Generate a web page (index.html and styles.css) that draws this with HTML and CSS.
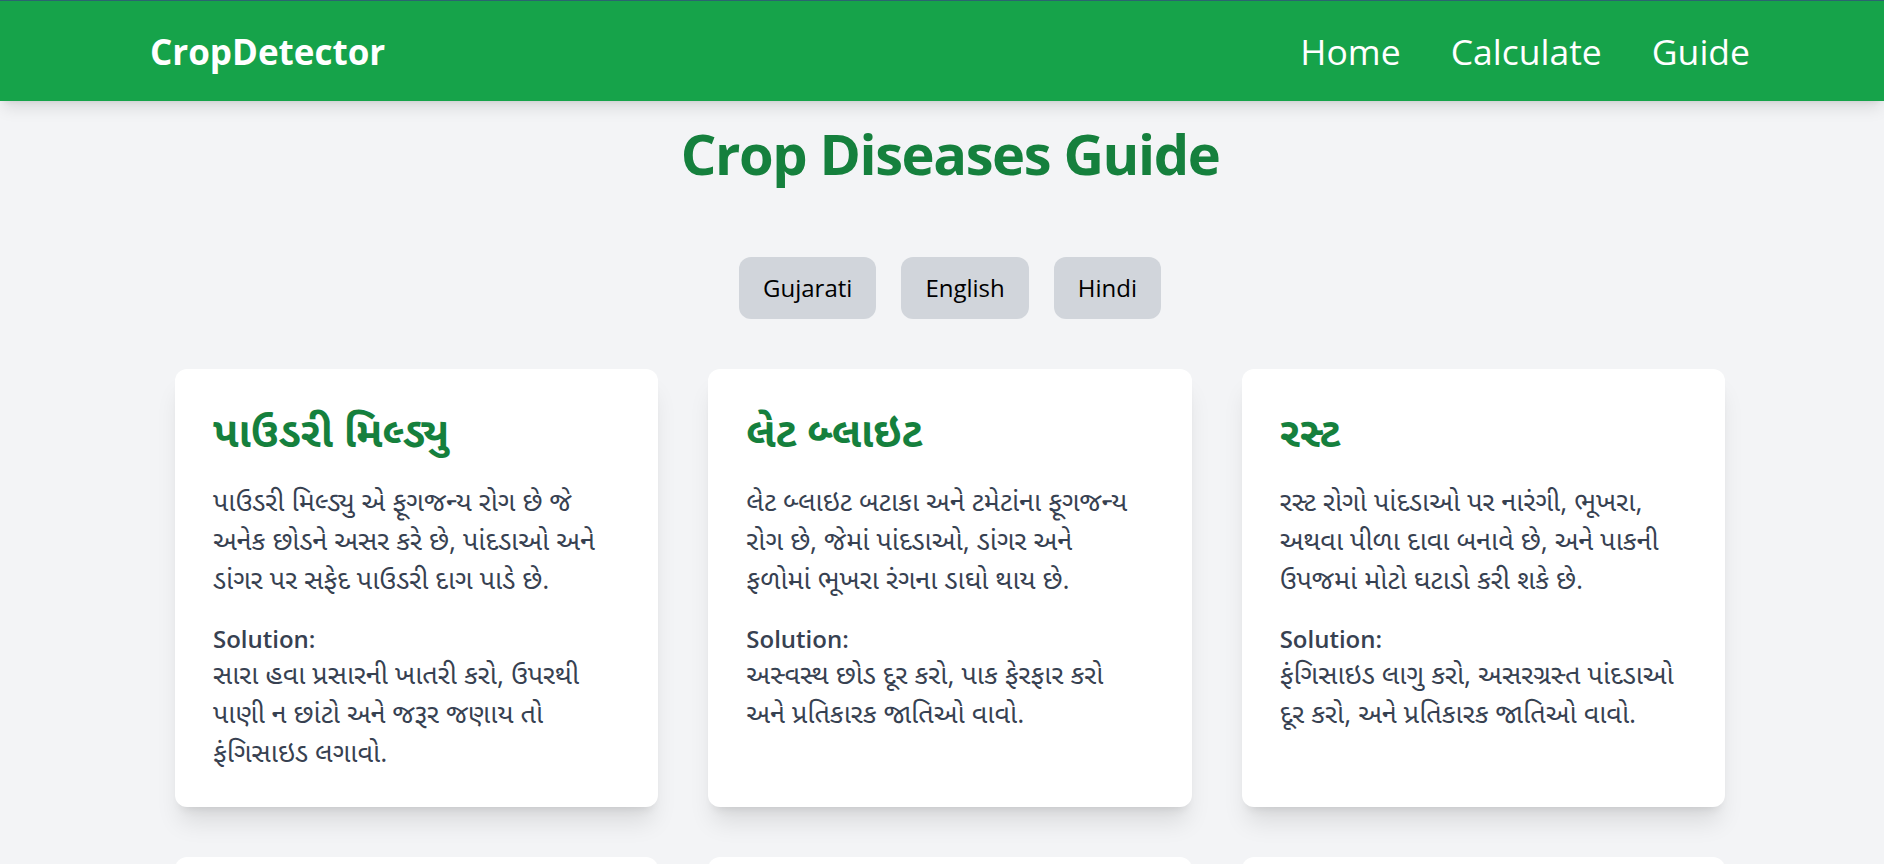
FILE: index.html
```html
<!DOCTYPE html>
<html lang="gu">
<head>
<meta charset="utf-8">
<title>CropDetector - Crop Diseases Guide</title>
<link rel="stylesheet" href="styles.css">
</head>
<body>
<header class="navbar">
  <div class="nav-inner">
    <a class="brand" href="#">CropDetector</a>
    <nav class="nav-links">
      <a href="#">Home</a>
      <a href="#">Calculate</a>
      <a href="#">Guide</a>
    </nav>
  </div>
</header>
<main class="page">
  <h1 class="page-title">Crop Diseases Guide</h1>
  <div class="lang-switch">
    <button class="lang-btn">Gujarati</button>
    <button class="lang-btn">English</button>
    <button class="lang-btn">Hindi</button>
  </div>
  <div class="card-grid">
    <article class="card">
      <h2 class="card-title">પાઉડરી મિલ્ડ્યુ</h2>
      <p class="card-desc">પાઉડરી મિલ્ડ્યુ એ ફૂગજન્ય રોગ છે જે અનેક છોડને અસર કરે છે, પાંદડાઓ અને ડાંગર પર સફેદ પાઉડરી દાગ પાડે છે.</p>
      <p class="card-solution"><strong class="sol-label">Solution:</strong>સારા હવા પ્રસારની ખાતરી કરો, ઉપરથી પાણી ન છાંટો અને જરૂર જણાય તો ફંગિસાઇડ લગાવો.</p>
    </article>
    <article class="card">
      <h2 class="card-title">લેટ બ્લાઇટ</h2>
      <p class="card-desc">લેટ બ્લાઇટ બટાકા અને ટમેટાંના ફૂગજન્ય રોગ છે, જેમાં પાંદડાઓ, ડાંગર અને<br>ફળોમાં ભૂખરા રંગના ડાઘો થાય છે.</p>
      <p class="card-solution"><strong class="sol-label">Solution:</strong>અસ્વસ્થ છોડ દૂર કરો, પાક ફેરફાર કરો અને પ્રતિકારક જાતિઓ વાવો.</p>
    </article>
    <article class="card">
      <h2 class="card-title">રસ્ટ</h2>
      <p class="card-desc">રસ્ટ રોગો પાંદડાઓ પર નારંગી, ભૂખરા, અથવા પીળા દાવા બનાવે છે, અને પાકની ઉપજમાં મોટો ઘટાડો કરી શકે છે.</p>
      <p class="card-solution"><strong class="sol-label">Solution:</strong>ફંગિસાઇડ લાગુ કરો, અસરગ્રસ્ત પાંદડાઓ દૂર કરો, અને પ્રતિકારક જાતિઓ વાવો.</p>
    </article>
    <article class="card">
      <h2 class="card-title">બેક્ટેરિયલ બ્લાઇટ</h2>
      <p class="card-desc">બેક્ટેરિયલ બ્લાઇટ પાંદડાઓ પર પાણીથી ભરેલા ડાઘ બનાવે છે, જે પછી પીળા અને સૂકા થઈ જાય છે.</p>
      <p class="card-solution"><strong class="sol-label">Solution:</strong>રોગમુક્ત બીજ વાપરો અને કોપર આધારિત દવા છાંટો.</p>
    </article>
    <article class="card">
      <h2 class="card-title">લીફ સ્પોટ</h2>
      <p class="card-desc">લીફ સ્પોટ પાંદડાઓ પર નાના ભૂખરા અથવા કાળા ડાઘ બનાવે છે.</p>
      <p class="card-solution"><strong class="sol-label">Solution:</strong>ચેપગ્રસ્ત પાંદડાઓ દૂર કરો અને ફંગિસાઇડ લગાવો.</p>
    </article>
    <article class="card">
      <h2 class="card-title">રૂટ રોટ</h2>
      <p class="card-desc">રૂટ રોટ વધુ પાણીને કારણે મૂળ સડી જાય છે અને છોડ કરમાઈ જાય છે.</p>
      <p class="card-solution"><strong class="sol-label">Solution:</strong>યોગ્ય નિકાલ રાખો અને વધુ પાણી આપવાનું ટાળો.</p>
    </article>
  </div>
</main>
</body>
</html>
```
FILE: styles.css
```css
* { box-sizing: border-box; }

body {
  margin: 0;
  background: #f3f4f6;
  font-family: "Open Sans", "Noto Sans", "Noto Sans Gujarati", "Lohit Gujarati", sans-serif;
  color: #374151;
}

.navbar {
  background: #16a34a;
  border-top: 1px solid #2b6470;
  box-shadow: 0 10px 15px -3px rgba(0,0,0,0.1), 0 4px 6px -4px rgba(0,0,0,0.1);
  padding-left: 16px;
  position: relative;
}

.nav-inner {
  max-width: 1600px;
  margin: 0 auto;
  height: 100px;
  display: flex;
  align-items: center;
  justify-content: space-between;
}

.brand {
  color: #fff;
  text-decoration: none;
  font-weight: 700;
  font-size: 35px;
}

.nav-links {
  display: flex;
  gap: 50px;
}

.nav-links a {
  color: #fff;
  text-decoration: none;
  font-size: 35.5px;
}

.page {
  padding-left: 16px;
  padding-bottom: 40px;
}

.page-title {
  margin: 22px 0 0;
  text-align: center;
  color: #15803d;
  font-size: 56px;
  line-height: 60px;
  font-weight: 700;
  letter-spacing: -1.4px;
}

.lang-switch {
  margin-top: 74px;
  display: flex;
  justify-content: center;
  gap: 25px;
}

.lang-btn {
  font-family: inherit;
  font-size: 24px;
  line-height: 32px;
  padding: 15px 24px;
  border: none;
  border-radius: 12px;
  background: #d1d5db;
  color: #000;
}

.card-grid {
  width: 1550px;
  margin: 50px auto 0;
  display: grid;
  grid-template-columns: repeat(3, 1fr);
  gap: 50px;
}

.card {
  background: #fff;
  border-radius: 12px;
  box-shadow: 0 20px 25px -5px rgba(0,0,0,0.1), 0 8px 10px -6px rgba(0,0,0,0.1);
  padding: 38px 48px 36px 38px;
}

.card-title {
  margin: 0 0 26px;
  color: #15803d;
  font-size: 42px;
  line-height: 48px;
  font-weight: 700;
}

.card-desc {
  margin: 0 0 26px;
  font-size: 27px;
  line-height: 39px;
}

.card-solution {
  margin: 0;
  font-size: 27px;
  line-height: 39px;
}

.sol-label {
  display: block;
  font-size: 24px;
  line-height: 30px;
  font-weight: 600;
}
```
